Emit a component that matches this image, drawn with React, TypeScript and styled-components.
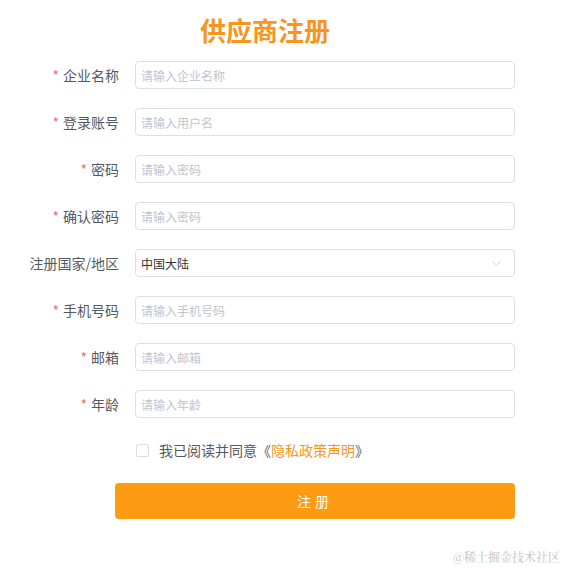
import React from 'react'
import styled, { createGlobalStyle } from 'styled-components'
import { ChevronDown } from 'lucide-react'

const GlobalStyle = createGlobalStyle`
    body {
        margin: 0;
        background: #ffffff;
        font-family: "Noto Sans CJK SC", "Noto Sans", sans-serif;
    }
`

const Page = styled.div`
    width: 566px;
    height: 568px;
    display: flex;
    flex-direction: column;
`

const Title = styled.h1`
    margin: 11px 0 0 0;
    padding-right: 36px;
    text-align: center;
    font-size: 26px;
    line-height: 37px;
    font-weight: 700;
    color: #f8951d;
`

const Form = styled.div`
    display: flex;
    flex-direction: column;
    gap: 19px;
    margin-top: 13px;
`

const Row = styled.div`
    display: flex;
    align-items: center;
    gap: 16px;
    height: 28px;
`

const Label = styled.label`
    width: 119px;
    text-align: right;
    font-size: 14px;
    color: #555a60;
`

const Star = styled.span`
    color: #f56c6c;
    margin-right: 4px;
`

const Input = styled.input`
    box-sizing: border-box;
    width: 380px;
    height: 28px;
    padding: 0 5px;
    border: 1px solid #dcdfe6;
    border-radius: 4px;
    font-family: inherit;
    font-size: 12px;
    color: #333;
    outline: none;

    &::placeholder {
        color: #c0c4cc;
    }
`

const Select = styled.div`
    box-sizing: border-box;
    width: 380px;
    height: 28px;
    padding: 0 10px 0 5px;
    border: 1px solid #dcdfe6;
    border-radius: 4px;
    display: flex;
    align-items: center;
    justify-content: space-between;
    font-size: 12px;
    color: #333;
`

const AgreeRow = styled.div`
    display: flex;
    align-items: center;
    gap: 10px;
    margin: 22px 0 0 136px;
    font-size: 14px;
    color: #555a60;
`

const Box = styled.span`
    box-sizing: border-box;
    width: 13px;
    height: 13px;
    border: 1px solid #dcdfe6;
    border-radius: 2px;
`

const Link = styled.span`
    color: #f8951d;
`

const Submit = styled.button`
    margin: 23px 0 0 115px;
    width: 400px;
    height: 36px;
    border: none;
    border-radius: 4px;
    background: #fd9b12;
    color: #ffffff;
    font-family: inherit;
    font-size: 14px;
    letter-spacing: 4px;
`

const Footer = styled.div`
    margin-top: auto;
    padding: 0 6px 3px 0;
    text-align: right;
    font-family: "Noto Serif CJK SC", "Liberation Serif", serif;
    font-size: 12px;
    color: #c3c3c3;
`

const fields = [
    { label: '企业名称', ph: '请输入企业名称' },
    { label: '登录账号', ph: '请输入用户名' },
    { label: '密码', ph: '请输入密码' },
    { label: '确认密码', ph: '请输入密码' },
]

const fields2 = [
    { label: '手机号码', ph: '请输入手机号码' },
    { label: '邮箱', ph: '请输入邮箱' },
    { label: '年龄', ph: '请输入年龄' },
]

function App() {
    return (
        <>
            <GlobalStyle />
            <Page>
                <Title>供应商注册</Title>
                <Form>
                    {fields.map(f => (
                        <Row key={f.label}>
                            <Label><Star>*</Star>{f.label}</Label>
                            <Input placeholder={f.ph} />
                        </Row>
                    ))}
                    <Row>
                        <Label>注册国家/地区</Label>
                        <Select>
                            中国大陆
                            <ChevronDown size={15} strokeWidth={1.2} color="#c0c4cc" />
                        </Select>
                    </Row>
                    {fields2.map(f => (
                        <Row key={f.label}>
                            <Label><Star>*</Star>{f.label}</Label>
                            <Input placeholder={f.ph} />
                        </Row>
                    ))}
                </Form>
                <AgreeRow>
                    <Box />
                    <span>我已阅读并同意《<Link>隐私政策声明</Link>》</span>
                </AgreeRow>
                <Submit>注册</Submit>
                <Footer>@稀土掘金技术社区</Footer>
            </Page>
        </>
    )
}

export default App
